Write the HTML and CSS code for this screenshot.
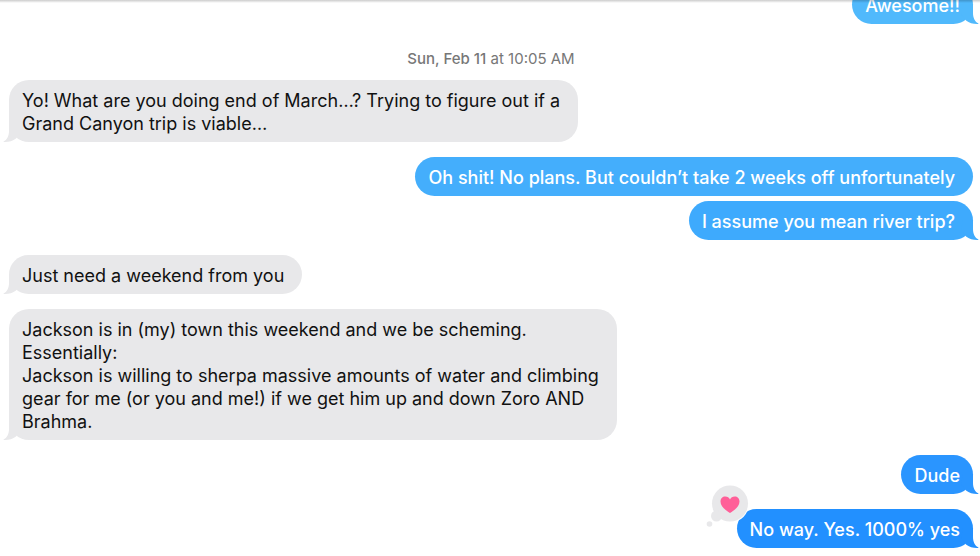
FILE: index.html
```html
<!DOCTYPE html>
<html lang="en">
<head>
<meta charset="utf-8">
<title>Messages</title>
<link rel="stylesheet" href="styles.css">
</head>
<body>
<svg class="defs" aria-hidden="true">
  <symbol id="tail" viewBox="0 0 26 20"><path d="M18 0V9C18 14 20 18 23.500 19.500C23.500 20 23 20 22 20C18 20 14 19 11 16.500L6 10L8 0Z"/></symbol>
</svg>
<main class="thread">
  <p class="bubble sent tone-1">Awesome!!<svg class="tail"><use href="#tail"/></svg></p>
  <p class="stamp"><b>Sun, Feb 11</b> at 10:05 AM</p>
  <p class="bubble received">Yo! What are you doing end of March…? Trying to figure out if a<br>Grand Canyon trip is viable…<svg class="tail"><use href="#tail"/></svg></p>
  <p class="bubble sent roomy tone-2 grouped">Oh shit! No plans. But couldn’t take 2 weeks off unfortunately</p>
  <p class="bubble sent roomy tone-3">I assume you mean river trip?<svg class="tail"><use href="#tail"/></svg></p>
  <p class="bubble received">Just need a weekend from you<svg class="tail"><use href="#tail"/></svg></p>
  <p class="bubble received">Jackson is in (my) town this weekend and we be scheming.<br>Essentially:<br>Jackson is willing to sherpa massive amounts of water and climbing<br>gear for me (or you and me!) if we get him up and down Zoro AND<br>Brahma.<svg class="tail"><use href="#tail"/></svg></p>
  <p class="bubble sent tone-4">Dude<svg class="tail"><use href="#tail"/></svg></p>
  <p class="bubble sent tone-5">No way. Yes. 1000% yes<svg class="tail"><use href="#tail"/></svg>
    <svg class="reaction" viewBox="0 0 44 44" role="img" aria-label="Loved">
      <circle cx="24" cy="19.500" r="19" fill="#fff"/>
      <g fill="#e8e8ea"><circle cx="24" cy="19.500" r="18"/><circle cx="10.500" cy="32" r="5.500"/><circle cx="3.500" cy="40" r="2.800"/></g>
      <path fill="#ff5f98" d="M24 29C20 26.500 14.500 22.500 14.500 17.500C14.500 14.500 16.500 12.500 19.300 12.500C21.500 12.500 23.200 13.700 24 15.500C24.800 13.700 26.500 12.500 28.700 12.500C31.500 12.500 33.500 14.500 33.500 17.500C33.500 22.500 28 26.500 24 29Z"/>
    </svg>
  </p>
</main>
</body>
</html>
```
FILE: styles.css
```css
* { box-sizing: border-box; }
body {
  margin: 0;
  background: #fff;
  color: #111;
  font: 18px/23px Inter, "Liberation Sans", sans-serif;
  font-optical-sizing: none;
  overflow: hidden;
}
body::before {
  content: "";
  position: absolute;
  z-index: 1;
  inset: 0 0 auto;
  height: 3px;
  background: linear-gradient(rgba(0, 0, 0, .2), rgba(0, 0, 0, 0));
}
.defs { position: absolute; width: 0; height: 0; }
.thread {
  display: flex;
  flex-direction: column;
  align-items: flex-start;
  gap: 15px;
  margin-top: -15px;
  padding: 0 7px 8px 9px;
}
p { margin: 0; }
.bubble {
  position: relative;
  padding: 9px 13px 7px;
  border-radius: 20px;
  white-space: nowrap;
}
.received { padding-right: 18px; background: #e8e8ea; fill: #e8e8ea; }
.sent { align-self: flex-end; color: #fff; font-weight: 500; }
.roomy { padding-right: 18px; }
.grouped { margin-bottom: -10px; }
.tone-1 { background: #50b9fc; fill: #50b9fc; }
.tone-2 { background: #44aefc; }
.tone-3 { background: #3eaafd; fill: #3eaafd; }
.tone-4 { background: #2a95ff; fill: #2a95ff; }
.tone-5 { background: #2290ff; fill: #2290ff; }
.tail {
  position: absolute;
  right: -8px;
  bottom: 0;
  width: 26px;
  height: 20px;
}
.received .tail { right: auto; left: -8px; transform: scaleX(-1); }
.stamp {
  align-self: center;
  margin: 8px 0 -5px;
  color: #777;
  font-size: 15px;
}
.stamp b { font-weight: 500; }
.reaction {
  position: absolute;
  left: -31px;
  top: -25px;
  width: 44px;
  height: 44px;
}
```
